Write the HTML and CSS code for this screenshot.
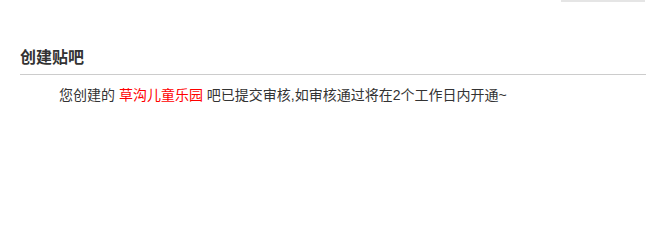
FILE: index.html
```html
<!doctype html>
<html lang="zh-CN">
<head>
	<meta charset="utf-8" />
	<title>创建贴吧</title>
	<link rel="stylesheet" href="styles.css">
</head>
<body>
	<div class="top-bar">
		<span class="top-line"></span>
	</div>
	<div class="create-box">
		<h2 class="create-title">创建贴吧</h2>
		<p class="create-tip">您创建的 <span class="forum-name">草沟儿童乐园</span> 吧已提交审核,如审核通过将在2个工作日内开通~</p>
	</div>
</body>
</html>
```

FILE: styles.css
```css
* {
	margin: 0;
	padding: 0;
}
body {
	font-family: "Liberation Sans", "Noto Sans CJK SC", sans-serif;
	color: #333;
	background-color: #fff;
}
.top-bar {
	display: flex;
	justify-content: flex-end;
	padding-right: 1px;
}
.top-line {
	display: block;
	width: 84px;
	height: 2px;
	background-color: #e5e5e5;
}
.create-box {
	margin-left: 20px;
	padding-top: 44px;
}
.create-title {
	font-size: 16px;
	font-weight: bold;
	line-height: 24px;
	padding-bottom: 4px;
	border-bottom: 1px solid #ccc;
	color: #333;
}
.create-tip {
	font-size: 14px;
	line-height: 20px;
	margin-top: 10px;
	padding-left: 39px;
}
.forum-name {
	color: #f00;
}
```
